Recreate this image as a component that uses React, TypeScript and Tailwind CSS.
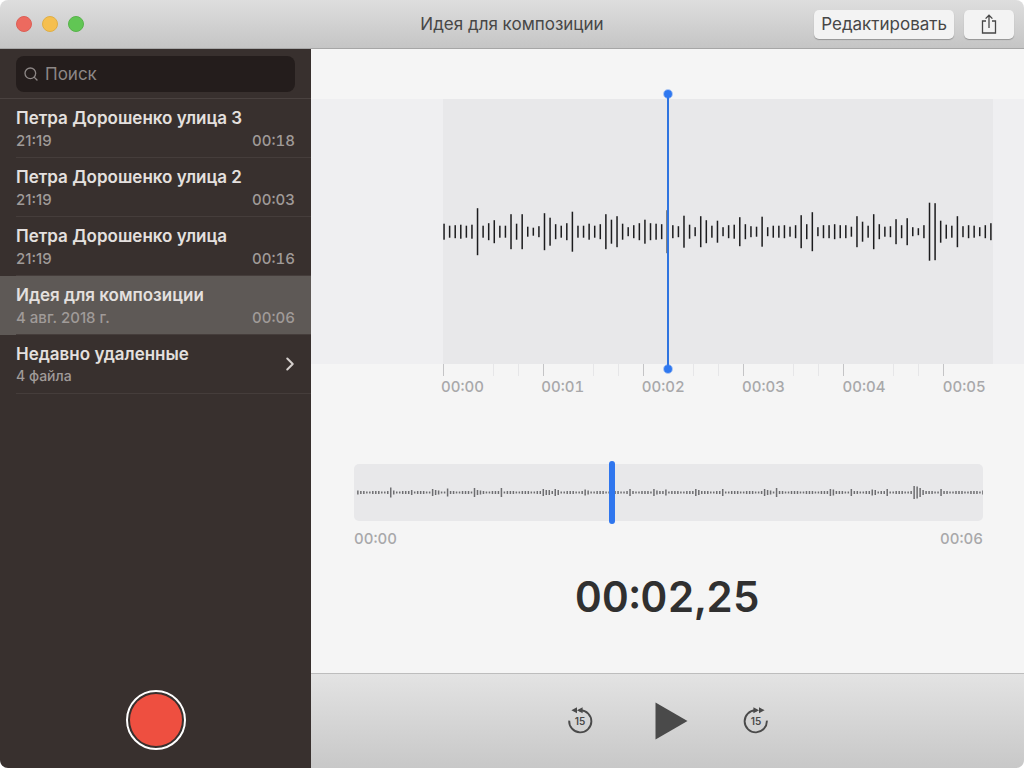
import { useState } from 'react';
import { ChevronRight, Search } from 'lucide-react';

const recordings = [
  { id: 1, title: 'Петра Дорошенко улица 3', date: '21:19', length: '00:18' },
  { id: 2, title: 'Петра Дорошенко улица 2', date: '21:19', length: '00:03' },
  { id: 3, title: 'Петра Дорошенко улица', date: '21:19', length: '00:16' },
  { id: 4, title: 'Идея для композиции', date: '4 авг. 2018 г.', length: '00:06' },
];

const DURATION = 5.5;

// Bar heights of the detailed waveform
const levels = [
  16, 12, 13, 14, 12, 14, 47, 12, 17, 23, 12, 12, 35, 16, 35, 10, 8, 11, 37, 28,
  15, 12, 17, 40, 12, 12, 16, 12, 15, 35, 24, 31, 16, 9, 13, 17, 24, 17, 16, 15,
  43, 13, 11, 32, 14, 9, 31, 23, 12, 22, 9, 13, 14, 29, 15, 11, 10, 30, 9, 12,
  12, 13, 10, 13, 33, 15, 39, 9, 13, 13, 15, 13, 13, 10, 31, 20, 12, 35, 15, 10,
  11, 25, 13, 27, 9, 7, 13, 58, 57, 22, 14, 12, 31, 11, 13, 12, 9, 13, 17,
];

// Peaks of the overview: bar index -> height, everything else is quiet
const peaks: Record<number, number> = {
  0: 4, 11: 10, 12: 4, 18: 5, 25: 7, 26: 5, 27: 4, 30: 8, 39: 9, 40: 5, 41: 4,
  48: 9, 62: 7, 63: 5, 64: 5, 66: 7, 67: 5, 76: 6, 77: 4, 91: 7, 99: 7, 100: 4,
  103: 6, 113: 7, 114: 5, 122: 7, 136: 7, 137: 5, 138: 4, 140: 9, 158: 7, 159: 6,
  165: 7, 172: 6, 173: 5, 177: 7, 186: 13, 187: 12, 188: 9, 189: 5, 195: 7, 209: 4,
};

const overview = Array.from({ length: 210 }, (_, i) => peaks[i] ?? (i % 5 < 3 ? 3 : 2));

function formatTime(seconds: number) {
  const [whole, fraction] = seconds.toFixed(2).split('.');
  return `00:${whole.padStart(2, '0')},${fraction}`;
}

function ShareIcon() {
  return (
    <svg width="18" height="22" viewBox="0 0 18 22" fill="none" stroke="currentColor" strokeWidth="1.3">
      <path d="M6 8H2.5v12h13V8H12" />
      <path d="M9 15V2.2M5.6 5.6 9 2.2l3.4 3.4" />
    </svg>
  );
}

function SkipIcon({ forward = false }: { forward?: boolean }) {
  return (
    <svg width="32" height="32" viewBox="0 0 32 32">
      <g transform={forward ? 'translate(32 0) scale(-1 1)' : undefined}>
        <path
          d="M5.2 15.6a11.1 11.1 0 1 0 11.1-10.4H15"
          fill="none"
          stroke="#4a4a4a"
          strokeWidth="1.9"
        />
        <path d="M13 2.2v6L7.4 5.2zM18.6 2.2v6L13 5.2z" fill="#4a4a4a" />
      </g>
      <text x="16" y="19.7" textAnchor="middle" fontSize="10" fontWeight="600" fill="#4a4a4a">
        15
      </text>
    </svg>
  );
}

function TitleBar() {
  return (
    <header className="grid h-[49px] grid-cols-[1fr_auto_1fr] items-center border-b border-[#a6a6a6] bg-gradient-to-b from-[#dedede] to-[#c5c5c5] pr-[10px] pl-4">
      <div className="flex gap-[10px]">
        <button aria-label="Закрыть" className="h-4 w-4 rounded-full border border-[#dc5f56] bg-[#ec6a5f]" />
        <button aria-label="Свернуть" className="h-4 w-4 rounded-full border border-[#dfae45] bg-[#f5bf4f]" />
        <button aria-label="Развернуть" className="h-4 w-4 rounded-full border border-[#57b34a] bg-[#61c654]" />
      </div>
      <h1 className="-ml-[6px] text-[17px] leading-6 text-[#474747]">Идея для композиции</h1>
      <div className="flex justify-end gap-[10px]">
        <button className="h-[29px] rounded-[5px] bg-[#f3f3f3] px-[7px] text-[17px] leading-6 text-[#474747] shadow-[0_1px_1px_#00000044]">
          Редактировать
        </button>
        <button
          aria-label="Поделиться"
          className="flex h-[29px] w-[50px] items-center justify-center rounded-[5px] bg-[#f3f3f3] text-[#474747] shadow-[0_1px_1px_#00000044]"
        >
          <ShareIcon />
        </button>
      </div>
    </header>
  );
}

function Sidebar() {
  const [selected, setSelected] = useState(4);

  return (
    <aside className="flex w-[311px] shrink-0 flex-col bg-[#38302e]">
      <div className="border-b border-[#4a4240] px-4 pt-[7px] pb-[6px]">
        <label className="flex h-9 items-center gap-[6px] rounded-lg bg-[#241d1c] px-[7px] text-[#8d8786]">
          <Search className="h-4 w-4" strokeWidth={2} />
          <input
            type="search"
            aria-label="Поиск"
            placeholder="Поиск"
            className="min-w-0 flex-1 bg-transparent text-[17px] leading-6 outline-none placeholder:text-[#8d8786]"
          />
        </label>
      </div>

      <ul>
        {recordings.map((rec) => (
          <li key={rec.id} className={rec.id === selected ? 'bg-[#5e5956]' : ''}>
            <button onClick={() => setSelected(rec.id)} className="block w-full pl-4 text-left">
              <span className="block h-[59px] border-b border-[#453d3b] pt-[7px] pr-4">
                <span className="block text-[17px] leading-6 font-semibold text-[#e4e0df]">{rec.title}</span>
                <span className="flex justify-between text-[15px] leading-[22px] font-medium text-[#a09b99]">
                  <span>{rec.date}</span>
                  <span className="tabular-nums">{rec.length}</span>
                </span>
              </span>
            </button>
          </li>
        ))}
        <li>
          <button className="block w-full pl-4 text-left">
            <span className="flex h-[59px] items-center justify-between border-b border-[#453d3b] pr-[10px]">
              <span>
                <span className="block text-[17px] leading-6 font-semibold text-[#e4e0df]">Недавно удаленные</span>
                <span className="block text-[14px] leading-5 font-medium text-[#a09b99]">4 файла</span>
              </span>
              <ChevronRight className="h-[22px] w-[22px] text-[#d5d0ce]" strokeWidth={2.2} />
            </span>
          </button>
        </li>
      </ul>

      <div className="mt-auto flex justify-center pb-[18px]">
        <button
          aria-label="Записать"
          className="flex h-[60px] w-[60px] items-center justify-center rounded-full border-2 border-white"
        >
          <span className="h-[52px] w-[52px] rounded-full bg-[#ee4f40]" />
        </button>
      </div>
    </aside>
  );
}

function Waveform({ position }: { position: number }) {
  return (
    <div className="mt-[50px]">
      <div className="bg-[#efeff1] pr-[31px] pl-[132px]">
        <div className="relative bg-[#e8e8ea]">
          <svg viewBox="0 0 550 265" preserveAspectRatio="none" className="block h-[265px] w-full">
            {levels.map((h, i) => (
              <rect key={i} x={0.3 + i * 5.58} y={132.7 - h / 2} width="1.5" height={h} fill="#1c1c1e" />
            ))}
          </svg>
          <div
            className="absolute -top-[5px] -bottom-[5px] w-[2px] -translate-x-1/2 bg-[#2f74e0]"
            style={{ left: `${(position / DURATION) * 100}%` }}
          >
            <span className="absolute -top-1 -left-[3px] h-2 w-2 rounded-full bg-[#2f78f0] outline outline-[#2f78f0]/40" />
            <span className="absolute -bottom-1 -left-[3px] h-2 w-2 rounded-full bg-[#2f78f0] outline outline-[#2f78f0]/40" />
          </div>
        </div>
      </div>

      {/* Time ruler */}
      <div className="pr-[31px] pl-[132px]">
        <svg viewBox="0 0 550 12" preserveAspectRatio="none" className="block h-3 w-full">
          {[0, 1, 2, 3, 4, 5].map((s) => (
            <g key={s}>
              <rect x={s * 100} y="0" width="1" height="12" fill="#c4c4c6" />
              <rect x={s * 100 + 50} y="0" width="1" height="12" fill="#e6e6e8" />
              <rect x={s * 100 + 75} y="0" width="1" height="12" fill="#e6e6e8" />
            </g>
          ))}
        </svg>
        <div className="-ml-[2px] grid grid-cols-[repeat(5,2fr)_1fr] text-[15px] leading-[22px] font-medium text-[#a8a8aa] tabular-nums">
          {['00:00', '00:01', '00:02', '00:03', '00:04', '00:05'].map((t) => (
            <span key={t}>{t}</span>
          ))}
        </div>
      </div>
    </div>
  );
}

export default function App() {
  const [position, setPosition] = useState(2.25);

  return (
    <div className="min-h-screen bg-white font-['Inter',sans-serif]">
      <div className="flex min-h-screen flex-col overflow-hidden rounded-lg">
        <TitleBar />
        <div className="flex flex-1">
          <Sidebar />
          <main className="flex min-w-0 flex-1 flex-col bg-[#f5f5f5]">
            <Waveform position={position} />

            <div className="mt-[66px] pr-[41px] pl-[43px]">
              <div className="relative rounded-[5px] bg-[#e8e8ea]">
                <svg viewBox="0 0 628 57" preserveAspectRatio="none" className="block h-[57px] w-full">
                  {overview.map((h, i) => (
                    <rect key={i} x={3.1 + i * 2.986} y={28.5 - h / 2} width="1.5" height={h} fill="#6e6e71" />
                  ))}
                </svg>
                <input
                  type="range"
                  aria-label="Позиция воспроизведения"
                  min="0"
                  max={DURATION}
                  step="0.01"
                  value={position}
                  onChange={(e) => setPosition(Number(e.target.value))}
                  className="absolute inset-x-0 -top-[3px] h-[63px] w-full appearance-none bg-transparent [&::-webkit-slider-thumb]:h-[63px] [&::-webkit-slider-thumb]:w-[6px] [&::-webkit-slider-thumb]:appearance-none [&::-webkit-slider-thumb]:rounded-full [&::-webkit-slider-thumb]:bg-[#2f76ee]"
                />
              </div>
              <div className="mt-[7px] flex justify-between text-[15px] leading-[22px] font-medium text-[#a8a8aa] tabular-nums">
                <span>00:00</span>
                <span>00:06</span>
              </div>
            </div>

            <p className="mt-[19px] mb-auto text-center text-[42px] leading-[56px] font-semibold text-[#303030] tabular-nums">
              {formatTime(position)}
            </p>

            <footer className="flex h-[95px] items-center justify-center gap-12 border-t border-[#bdbdbd] bg-gradient-to-b from-[#e3e3e3] to-[#c8c8c8]">
              <button aria-label="Назад на 15 секунд">
                <SkipIcon />
              </button>
              <button aria-label="Воспроизвести">
                <svg width="48" height="48" viewBox="0 0 48 48">
                  <path d="M11.5 5.5v37l32-18.5z" fill="#4a4a4a" />
                </svg>
              </button>
              <button aria-label="Вперед на 15 секунд">
                <SkipIcon forward />
              </button>
            </footer>
          </main>
        </div>
      </div>
    </div>
  );
}
